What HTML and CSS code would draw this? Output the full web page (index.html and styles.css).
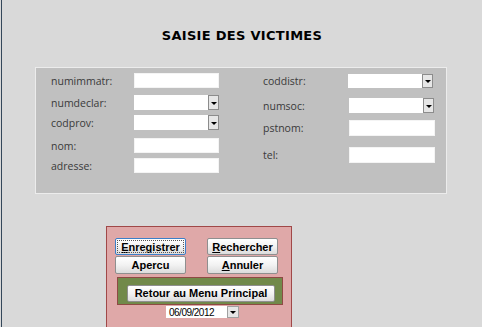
FILE: index.html
```html
<!DOCTYPE html>
<html lang="fr">
<head>
    <meta charset="UTF-8">
    <title>Saisie des victimes</title>
    <link rel="stylesheet" href="styles.css">
</head>
<body>
    <div class="form">
        <h1 class="title">SAISIE DES VICTIMES</h1>

        <div class="panel">
            <div class="col col-left">
                <div class="field">
                    <label>numimmatr:</label>
                    <div class="textbox"></div>
                </div>
                <div class="field">
                    <label>numdeclar:</label>
                    <div class="combo"><span class="combo-btn"></span></div>
                </div>
                <div class="field">
                    <label>codprov:</label>
                    <div class="combo"><span class="combo-btn"></span></div>
                </div>
                <div class="field">
                    <label>nom:</label>
                    <div class="textbox"></div>
                </div>
                <div class="field">
                    <label>adresse:</label>
                    <div class="textbox"></div>
                </div>
            </div>
            <div class="col col-right">
                <div class="field">
                    <label>coddistr:</label>
                    <div class="combo short"><span class="combo-btn"></span></div>
                </div>
                <div class="field">
                    <label>numsoc:</label>
                    <div class="combo"><span class="combo-btn"></span></div>
                </div>
                <div class="field">
                    <label>pstnom:</label>
                    <div class="textbox"></div>
                </div>
                <div class="field">
                    <label>tel:</label>
                    <div class="textbox"></div>
                </div>
            </div>
        </div>

        <div class="actions">
            <div class="btn-grid">
                <button class="btn focused"><u>E</u>nregistrer</button>
                <button class="btn"><u>R</u>echercher</button>
                <button class="btn tall">Apercu</button>
                <button class="btn tall"><u>A</u>nnuler</button>
            </div>
            <div class="menu-box">
                <button class="btn menu-btn">Retour au Menu Principal</button>
            </div>
            <div class="date-combo">
                <span class="date-text">06/09/2012</span>
                <span class="combo-btn"></span>
            </div>
        </div>
    </div>
</body>
</html>
```

FILE: styles.css
```css
html {
    background-color: #d9d9d9;
}
body {
    margin: 0;
    height: 327px;
    overflow: hidden;
}
.form {
    margin-left: 1px;
    height: 327px;
    border-left: 1px solid #34475a;
}
.title {
    margin: 0;
    padding-top: 28px;
    text-align: center;
    font-family: "DejaVu Sans", sans-serif;
    font-weight: bold;
    font-size: 13px;
    line-height: 15px;
    letter-spacing: 0.3px;
    color: #000;
}
.panel {
    margin: 24px 0 0 33px;
    width: 410px;
    height: 125px;
    border: 1px solid #ececec;
    background-color: #c0c0c0;
    display: grid;
    grid-template-columns: 227px 1fr;
}
.col {
    display: grid;
    align-content: start;
    align-items: start;
}
.col-left {
    padding: 5px 0 0 15px;
    grid-template-rows: 22px 20px 23px 20px 20px;
}
.col-right {
    padding-top: 5px;
    grid-template-rows: 25px 22px 27px 20px;
}
.field {
    display: flex;
    align-items: center;
    height: 15px;
}
.col-left label {
    width: 83px;
}
.col-right label {
    width: 86px;
}
.field label {
    font-family: "Open Sans", sans-serif;
    font-size: 10.5px;
    color: #3a3a3a;
}
.textbox {
    width: 85px;
    height: 15px;
    background-color: #fff;
    box-shadow: inset 0 0 0 1px #f4f4f4;
}
.col-right .textbox {
    height: 16px;
    width: 86px;
}
.combo {
    width: 85px;
    height: 15px;
    background-color: #fff;
    display: flex;
    justify-content: flex-end;
}
.combo.short {
    height: 14px;
    margin-left: -1px;
}
.combo-btn {
    width: 11px;
    height: 100%;
    box-sizing: border-box;
    border: 1px solid #8c8c8c;
    background-color: #e6e6e6;
    display: flex;
    align-items: center;
    justify-content: center;
}
.combo-btn::after {
    content: "";
    border-left: 3px solid transparent;
    border-right: 3px solid transparent;
    border-top: 3px solid #000;
    margin-top: 1px;
}
.actions {
    margin: 32px 0 0 104px;
    width: 186px;
    height: 110px;
    border: 1px solid #a04848;
    background-color: #dfa8a8;
    padding: 11px 0 0 8px;
    box-sizing: border-box;
}
.btn-grid {
    display: grid;
    grid-template-columns: 71px 71px;
    grid-template-rows: 17px 18px;
    column-gap: 21px;
    row-gap: 1px;
}
.btn {
    margin: 0;
    padding: 0;
    font-family: "Liberation Sans", Arial, sans-serif;
    font-weight: bold;
    font-size: 11px;
    color: #000;
    background: linear-gradient(#ffffff, #f2f2f2 50%, #dcdcdc);
    border: 1px solid #8f8f8f;
    border-radius: 2px;
}
.btn u {
    text-decoration-thickness: 1px;
}
.btn.focused {
    border-color: #3c7fc8;
    outline: 1px dotted #555;
    outline-offset: -3px;
}
.menu-box {
    margin: 3px 0 0 2px;
    width: 166px;
    height: 28px;
    box-sizing: border-box;
    border: 1px solid #8e4a44;
    background-color: #71894a;
    padding: 5px 0 0 9px;
}
.menu-btn {
    width: 148px;
    height: 17px;
}
.date-combo {
    margin: 1px 0 0 51px;
    width: 73px;
    height: 12px;
    background-color: #fff;
    display: flex;
    align-items: center;
    justify-content: space-between;
}
.date-text {
    padding-left: 3px;
    font-family: "Liberation Sans", Arial, sans-serif;
    font-size: 10px;
    letter-spacing: -0.5px;
    color: #000;
}
.date-combo .combo-btn {
    width: 12px;
    border-color: #a0a0a0;
}
```
